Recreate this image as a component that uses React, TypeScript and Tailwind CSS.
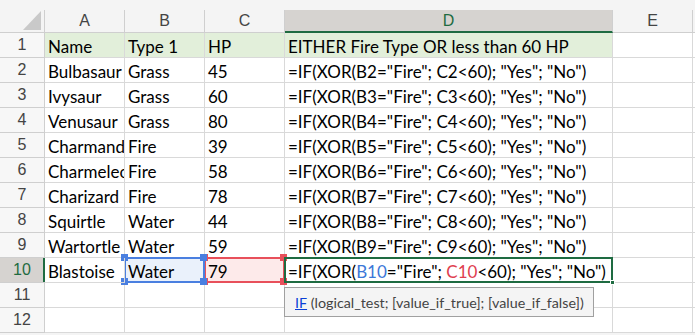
import React from "react";

const rows = [
  ["Bulbasaur", "Grass", "45"],
  ["Ivysaur", "Grass", "60"],
  ["Venusaur", "Grass", "80"],
  ["Charmander", "Fire", "39"],
  ["Charmeleon", "Fire", "58"],
  ["Charizard", "Fire", "78"],
  ["Squirtle", "Water", "44"],
  ["Wartortle", "Water", "59"],
];

const cols = ["A", "B", "C", "D", "E"];

const cell = "relative border-r border-b border-[#d9d9d9] h-[25px] flex items-center overflow-hidden whitespace-nowrap";
const txt = "pl-[3px] pt-[2px] text-[17px] leading-none text-black";

const Handle = ({ className }: { className: string }) => (
  <span className={"absolute w-[7px] h-[7px] z-20 " + className} />
);

const App = () => {
  return (
    <div
      className="w-[695px] h-[335px] bg-[#f4f4f4] overflow-hidden relative"
      style={{ fontFamily: "Lato, 'Liberation Sans', sans-serif" }}
    >
      <div className="h-[10px]" />
      <div className="grid grid-cols-[45px_80px_80px_80px_328px_80px_2px] bg-white">
        {/* header row */}
        <div className="h-[23px] bg-[#f4f4f4] border-r border-b border-[#cfcfcf] relative flex items-end justify-end pr-[3px] pb-[2px]">
          <svg width="18" height="19" viewBox="0 0 18 19">
            <polygon points="18,0 18,19 0,19" fill="#c9c9c9" />
          </svg>
        </div>
        {cols.map((c) => (
          <div
            key={c}
            className={
              "h-[23px] border-r border-b flex items-center justify-center text-[16px] " +
              (c === "D"
                ? "bg-[#d6d3d0] text-[#1e6b41] border-b-2 border-b-[#1e6b41] border-r-[#cfcfcf]"
                : "bg-[#f4f4f4] text-[#444] border-[#cfcfcf]")
            }
            style={{ fontFamily: "'Liberation Sans', sans-serif" }}
          >
            {c}
          </div>
        ))}
        <div className="h-[23px] bg-[#f4f4f4] border-b border-[#cfcfcf]" />

        {/* row 1 */}
        <RowHead n={1} />
        {["Name", "Type 1", "HP", "EITHER Fire Type OR less than 60 HP"].map((t) => (
          <div key={t} className={cell + " bg-[#e2efda]"}>
            <span className={txt}>{t}</span>
          </div>
        ))}
        <div className={cell} />
        <div className="border-b border-[#d9d9d9]" />

        {rows.map((r, i) => (
          <React.Fragment key={r[0]}>
            <RowHead n={i + 2} />
            <div className={cell}>
              <span className={txt}>{r[0]}</span>
            </div>
            <div className={cell}>
              <span className={txt}>{r[1]}</span>
            </div>
            <div className={cell}>
              <span className={txt}>{r[2]}</span>
            </div>
            <div className={cell}>
              <span className={txt}>
                =IF(XOR(B{i + 2}="Fire"; C{i + 2}&lt;60); "Yes"; "No")
              </span>
            </div>
            <div className={cell} />
            <div className="border-b border-[#d9d9d9]" />
          </React.Fragment>
        ))}

        {/* row 10 */}
        <RowHead n={10} active />
        <div className={cell + " z-30"}>
          <span className={txt}>Blastoise</span>
        </div>
        <div className={cell + " overflow-visible bg-[#eaf1fb] z-20"}>
          <div className="absolute inset-[-1px] border-2 border-[#4a7fe0]" />
          <Handle className="bg-[#4a7fe0] -left-[4px] -top-[4px]" />
          <Handle className="bg-[#4a7fe0] -right-[3px] -top-[4px]" />
          <Handle className="bg-[#4a7fe0] -left-[4px] -bottom-[3px]" />
          <Handle className="bg-[#4a7fe0] -right-[3px] -bottom-[3px]" />
          <span className={txt + " relative"}>Water</span>
        </div>
        <div className={cell + " overflow-visible bg-[#fdeaea] z-10"}>
          <div className="absolute inset-[-1px] border-2 border-[#e8505b]" />
          <Handle className="bg-[#e8505b] -left-[4px] -top-[4px]" />
          <Handle className="bg-[#e8505b] -right-[3px] -top-[4px]" />
          <Handle className="bg-[#e8505b] -left-[4px] -bottom-[3px]" />
          <Handle className="bg-[#e8505b] -right-[3px] -bottom-[3px]" />
          <span className={txt + " relative"}>79</span>
        </div>
        <div className={cell + " overflow-visible z-30"}>
          <div className="absolute -left-[1px] -top-[1px] -right-[1px] -bottom-[1px] border-2 border-[#1e6b41]" />
          <span className="absolute -right-[3px] -bottom-[3px] w-[5px] h-[5px] bg-[#1e6b41] border border-white" />
          <span className={txt + " relative"}>
            =IF(XOR(<span className="text-[#3c78d8]">B10</span>="Fire";{" "}
            <span className="text-[#e04050]">C10</span>&lt;60); "Yes"; "No")
          </span>
        </div>
        <div className={cell} />
        <div className="border-b border-[#d9d9d9]" />

        {/* rows 11, 12 */}
        {[11, 12].map((n) => (
          <React.Fragment key={n}>
            <RowHead n={n} />
            <div className={cell} />
            <div className={cell} />
            <div className={cell} />
            <div className={cell + " overflow-visible"}>
              {n === 11 && (
                <div className="absolute left-[-1px] top-[4px] w-[310px] h-[30px] bg-[#f4f4f4] border border-[#a0a0a0] z-40 flex items-center pl-[10px] pt-[1px] text-[14.3px] text-[#444] whitespace-nowrap">
                  <span className="text-[#0a3fd6] underline">IF</span>
                  <span>&nbsp;(logical_test; [value_if_true]; [value_if_false])</span>
                </div>
              )}
            </div>
            <div className={cell} />
            <div className="border-b border-[#d9d9d9]" />
          </React.Fragment>
        ))}
      </div>
    </div>
  );
};

const RowHead = ({ n, active }: { n: number; active?: boolean }) => (
  <div
    className={
      "h-[25px] border-r border-b border-[#cfcfcf] flex items-center justify-center text-[16px] relative " +
      (active ? "bg-[#d6d3d0] text-[#1e6b41]" : "bg-[#f7f7f7] text-[#444]")
    }
    style={{ fontFamily: "'Liberation Sans', sans-serif" }}
  >
    {n}
    {active && <span className="absolute right-[-1px] top-0 bottom-0 w-[2px] bg-[#1e6b41]" />}
  </div>
);

export default App;
